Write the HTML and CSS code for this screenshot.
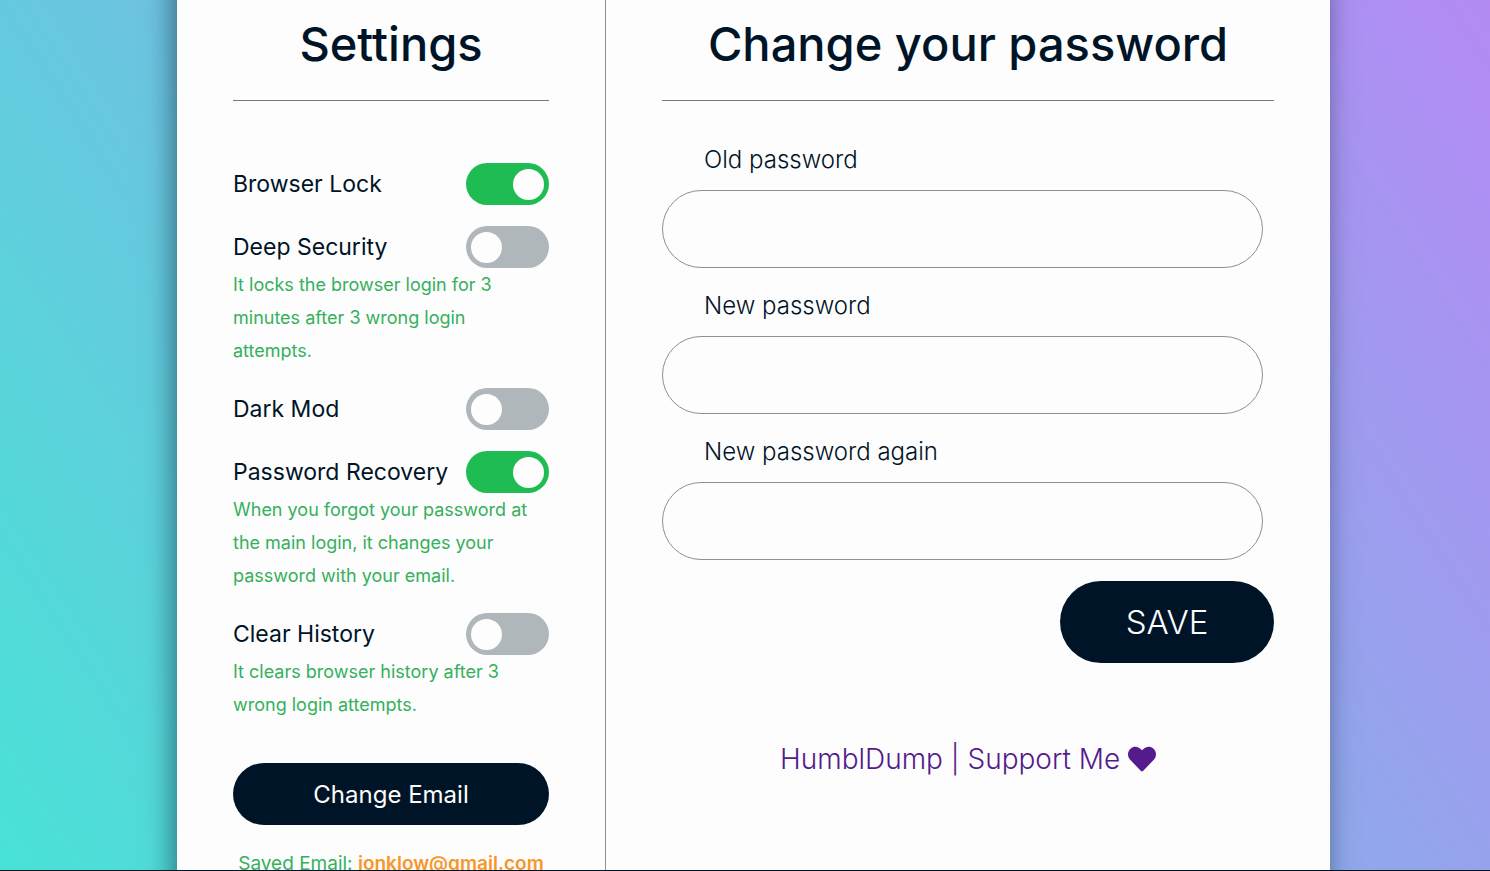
FILE: index.html
```
<!DOCTYPE html>
<html lang="en">
<head>
    <meta charset="UTF-8">
    <meta name="viewport" content="width=device-width, initial-scale=1.0">
    <title>Settings</title>
    <link rel="stylesheet" href="styles.css">
</head>
<body>
    <main class="container">
        <section class="settings">
            <h1 class="title">Settings</h1>

            <div class="options">
                <div class="option">
                    <label for="browserLock">Browser Lock</label>
                    <input type="checkbox" class="switch" id="browserLock" checked>
                </div>
                <div class="option">
                    <label for="deepSecurity">Deep Security</label>
                    <input type="checkbox" class="switch" id="deepSecurity">
                    <p class="note">It locks the browser login for 3 minutes after 3 wrong login attempts.</p>
                </div>
                <div class="option">
                    <label for="darkMod">Dark Mod</label>
                    <input type="checkbox" class="switch" id="darkMod">
                </div>
                <div class="option">
                    <label for="recovery">Password Recovery</label>
                    <input type="checkbox" class="switch" id="recovery" checked>
                    <p class="note">When you forgot your password at the main login, it changes your password with your email.</p>
                </div>
                <div class="option">
                    <label for="clearHistory">Clear History</label>
                    <input type="checkbox" class="switch" id="clearHistory">
                    <p class="note">It clears browser history after 3 wrong login attempts.</p>
                </div>
            </div>

            <button type="button" class="btn btn-email">Change Email</button>
            <p class="saved">Saved Email: <b>jonklow@gmail.com</b></p>
        </section>

        <section class="password">
            <h1 class="title">Change your password</h1>

            <form class="form">
                <label for="oldPassword">Old password</label>
                <input type="password" id="oldPassword">
                <label for="newPassword">New password</label>
                <input type="password" id="newPassword">
                <label for="newPassword2">New password again</label>
                <input type="password" id="newPassword2">
                <button type="submit" class="btn btn-save">SAVE</button>
            </form>

            <footer class="footer">
                <a href="#">HumblDump | Support Me
                    <svg class="heart" viewBox="0 0 512 512" aria-hidden="true">
                        <path d="M462 62c-55-47-136-38-186 14l-20 20-20-20C186 24 105 15 50 62c-63 54-66 150-10 208l193 200c13 13 33 13 46 0l193-200c56-58 53-154-10-208z"/>
                    </svg>
                </a>
            </footer>
        </section>
    </main>
</body>
</html>
```
FILE: styles.css
```
* {
    box-sizing: border-box;
    margin: 0;
    padding: 0;
}

html {
    overflow: hidden;
}

body {
    height: 100vh;
    padding: 0 160px 0 177px;
    overflow: hidden;
    border-bottom: 1px solid #001427;
    background: linear-gradient(57deg, #48e2d6, #b48af5);
    color: #001427;
    font-family: "Inter", sans-serif;
    font-size: 23px;
    line-height: 33px;
}

/* taller than the window, so the shadow runs along the whole side */
.container {
    display: grid;
    grid-template-columns: 429px 1fr;
    min-height: calc(100vh + 80px);
    margin: -40px 0;
    padding: 40px 0;
    background: #fdfdfd;
    box-shadow: -4px 0 26px rgba(0, 20, 39, .5);
}

.settings,
.password {
    padding: 10px 56px;
}

.settings {
    border-right: 1px solid #8c8f94;
}

.title {
    padding-bottom: 22px;
    border-bottom: 1px solid #77797d;
    font-size: 47px;
    font-weight: 500;
    line-height: 68px;
    text-align: center;
}

.options {
    display: flex;
    flex-direction: column;
    gap: 21px;
    margin: 62px 0 42px;
}

.option {
    display: flex;
    flex-wrap: wrap;
    align-items: center;
    justify-content: space-between;
}

.switch {
    display: flex;
    align-items: center;
    width: 83px;
    height: 42px;
    padding: 0 5px;
    border-radius: 21px;
    background: #b0b7bb;
    appearance: none;
    cursor: pointer;
}

.switch::before {
    content: "";
    width: 31px;
    height: 31px;
    border-radius: 50%;
    background: #fdfdfd;
}

.switch:checked {
    justify-content: flex-end;
    background: #1fbb53;
}

.note {
    width: 100%;
    padding-right: 4px;
    color: #35b05c;
    font-size: 18px;
}

.saved {
    margin-top: 22px;
    color: #35b05c;
    font-size: 19px;
    text-align: center;
    white-space: nowrap;
}

.saved b {
    color: #f7962b;
    font-weight: 600;
}

.btn {
    border: none;
    border-radius: 41px;
    background: #001427;
    color: #fdfdfd;
    font-family: inherit;
    cursor: pointer;
}

.btn-email {
    width: 100%;
    height: 62px;
    font-size: 24px;
}

.form {
    display: flex;
    flex-direction: column;
    margin-top: 21px;
    font-size: 24px;
    font-weight: 300;
}

.form label {
    margin: 21px 42px 14px;
}

.form input {
    height: 78px;
    margin-right: 11px;
    padding: 0 42px;
    border: 1px solid #8c8f94;
    border-radius: 39px;
    background: none;
    font-family: inherit;
    font-size: 24px;
}

.btn-save {
    align-self: flex-end;
    width: 214px;
    height: 82px;
    margin-top: 21px;
    font-size: 33px;
    font-weight: 300;
}

.footer {
    margin-top: 75px;
    font-size: 28px;
    font-weight: 300;
    line-height: 42px;
    text-align: center;
}

.footer a {
    color: #551a8b;
    text-decoration: none;
}

.heart {
    width: 28px;
    height: 28px;
    fill: #551a8b;
    vertical-align: -4px;
}
```
